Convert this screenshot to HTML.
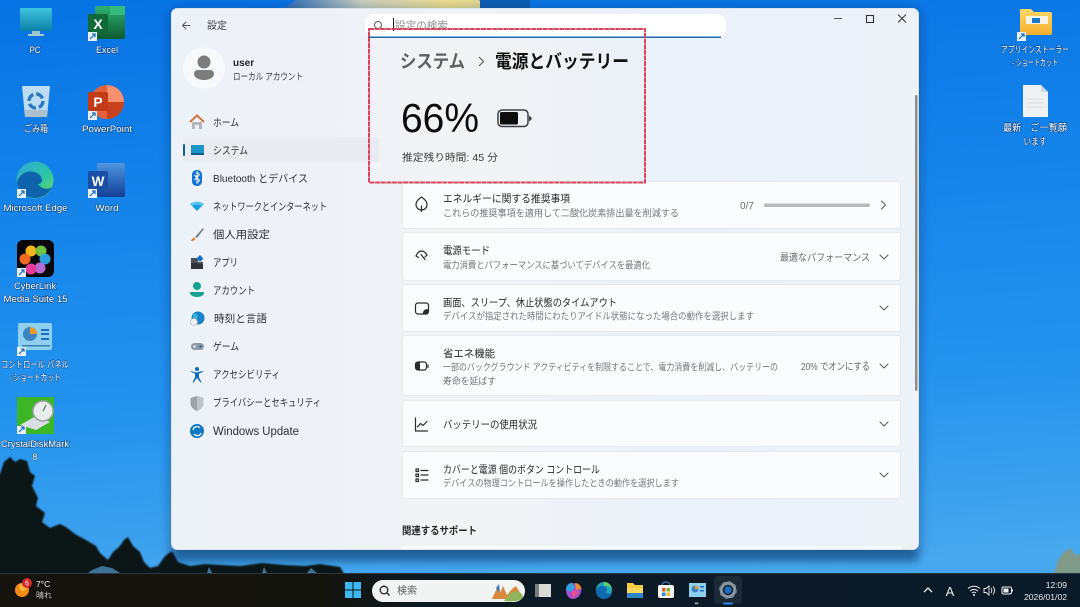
<!DOCTYPE html>
<html lang="ja"><head><meta charset="utf-8"><title>設定</title>
<style>
html,body{margin:0;padding:0;width:1080px;height:607px;overflow:hidden;background:#1a86e8}
svg{display:block}
text{font-family:"Liberation Sans","Noto Sans CJK JP",sans-serif}
.d{font-size:9.5px;fill:#fff;text-anchor:middle;paint-order:stroke;stroke:rgba(0,30,70,.55);stroke-width:1.2px}
.n{font-size:10.5px;fill:#2b2e33}
.t{font-size:10.5px;fill:#26282c}
.s{font-size:9.5px;fill:#74777c}
.r{font-size:10px;fill:#66696e}
.c{fill:none;stroke:#55585c;stroke-width:1;stroke-linecap:round;stroke-linejoin:round}
.i{fill:none;stroke:#2a2c30;stroke-width:1.2;stroke-linecap:round;stroke-linejoin:round}
.card{fill:#fbfcfe;stroke:#e7ebf0;stroke-width:1}
</style></head><body>
<svg width="1080" height="607" viewBox="0 0 1080 607" xmlns="http://www.w3.org/2000/svg">
<defs>
<linearGradient id="sky" x1="0" y1="0" x2="0.1" y2="1"><stop offset="0" stop-color="#0873e4"/><stop offset=".35" stop-color="#1484ea"/><stop offset=".7" stop-color="#2594ee"/><stop offset="1" stop-color="#48a8ee"/></linearGradient>
<linearGradient id="win" x1="0" y1="0" x2="1" y2="0"><stop offset="0" stop-color="#edf2f9"/><stop offset=".28" stop-color="#eff2f7"/><stop offset=".38" stop-color="#f2f3f4"/><stop offset=".65" stop-color="#ebf1f9"/><stop offset="1" stop-color="#edf2f9"/></linearGradient>
<linearGradient id="top" x1="0" y1="0" x2="1" y2="0"><stop offset="0" stop-color="#2f6fb5"/><stop offset=".35" stop-color="#c9cfc0"/><stop offset=".75" stop-color="#efe08f"/><stop offset="1" stop-color="#d9d79c"/></linearGradient>
<linearGradient id="bar" x1="0" y1="0" x2="1" y2="0"><stop offset="0" stop-color="#17130f"/><stop offset=".3" stop-color="#14140f"/><stop offset=".42" stop-color="#0c1a26"/><stop offset="1" stop-color="#0b1a28"/></linearGradient>
<linearGradient id="xl" x1="0" y1="0" x2="0" y2="1"><stop offset="0" stop-color="#2fb172"/><stop offset="1" stop-color="#0d5a30"/></linearGradient>
<linearGradient id="wd" x1="0" y1="0" x2="0" y2="1"><stop offset="0" stop-color="#4f95e0"/><stop offset="1" stop-color="#123f96"/></linearGradient>
<linearGradient id="pc" x1="0" y1="0" x2="0" y2="1"><stop offset="0" stop-color="#3fc4dd"/><stop offset="1" stop-color="#0c7fa8"/></linearGradient>
<linearGradient id="ed" x1="0" y1="0" x2="1" y2="1"><stop offset="0" stop-color="#2fa7dc"/><stop offset=".6" stop-color="#2ac7a3"/><stop offset="1" stop-color="#7ad65a"/></linearGradient>
<linearGradient id="fo" x1="0" y1="0" x2="0" y2="1"><stop offset="0" stop-color="#ffd867"/><stop offset="1" stop-color="#f3ae2d"/></linearGradient>
<filter id="ds" x="-5%" y="-5%" width="110%" height="110%"><feDropShadow dx="0" dy="2" stdDeviation="6" flood-color="#00204a" flood-opacity=".45"/></filter>
<filter id="b1"><feGaussianBlur stdDeviation="0.8"/></filter>
<filter id="b3" x="-5%" y="-100%" width="110%" height="300%"><feGaussianBlur stdDeviation="4"/></filter>
</defs>

<!-- wallpaper -->
<rect width="1080" height="607" fill="url(#sky)"/>
<polygon points="285,8 295,0 478,0 505,8" fill="url(#top)"/>
<rect x="480" y="0" width="50" height="8" fill="#0f5fb5"/>
<rect x="172" y="546" width="746" height="16" fill="#1d5f95" opacity=".75" filter="url(#b3)"/>
<g filter="url(#b1)" fill="#0b1719">
<polygon points="-10,474 0,474 4,462 10,457 15,462 20,459 27,461 30,472 35,476 32,486 38,498 36,506 45,513 42,522 50,528 60,524 66,527 75,534 86,540 96,546 100,553 108,560 113,552 119,547 124,540 128,537 133,546 140,552 144,562 150,568 158,566 165,556 172,551 178,562 190,566 205,564 222,565 240,566 262,563 285,565 305,566 320,564 340,567 348,580 -10,580"/>
</g>
<polygon fill="#4a8ab8" opacity=".8" points="92,570 102,566 112,568 120,573 88,573"/>
<polygon fill="#5a9cc8" opacity=".7" points="207,573 209,567 212,573"/>
<polygon fill="#5a9cc8" opacity=".7" points="262,573 264,567 267,573"/>
<polygon fill="#5a9cc8" opacity=".7" points="307,573 311,568 317,573"/>
<polygon fill="#7f9a88" points="1052,580 1058,560 1064,552 1070,548 1076,556 1080,553 1090,553 1090,580" filter="url(#b1)"/>

<!-- desktop icons -->
<rect x="20" y="8" width="32" height="23" rx="1" fill="url(#pc)"/><rect x="32" y="31" width="8" height="3" fill="#9fc2cf"/><rect x="28" y="34" width="16" height="2" fill="#a9c8d2"/>
<text class="d" x="35" y="53" textLength="11" lengthAdjust="spacingAndGlyphs">PC</text>
<rect x="95" y="6" width="30" height="33" rx="2" fill="url(#xl)"/><rect x="110" y="6" width="15" height="9" fill="#35b97c"/><rect x="88" y="14" width="20" height="19" rx="2" fill="#0e6b39"/>
<text x="98" y="29" font-size="14" font-weight="700" fill="#fff" text-anchor="middle">X</text>
<rect x="88" y="32" width="9" height="9" fill="#e6f1fb"/><path d="M90 39l5-5m-3 0h3v3" stroke="#1c6cc0" stroke-width="1.2" fill="none"/>
<text class="d" x="107" y="53" textLength="22" lengthAdjust="spacingAndGlyphs">Excel</text>
<path d="M22 86h28l-3 31h-22z" fill="#bcdcf2"/><rect x="25" y="110" width="22" height="7" fill="#aebfce"/>
<circle cx="36" cy="101" r="7" fill="none" stroke="#2a78c2" stroke-width="3.5" stroke-dasharray="8 3"/>
<text class="d" x="36" y="132" textLength="24" lengthAdjust="spacingAndGlyphs">ごみ箱</text>
<circle cx="107" cy="102" r="17" fill="#e2603a"/><path d="M107 85a17 17 0 0 1 17 17h-17z" fill="#f7906c"/><path d="M107 102h17a17 17 0 0 1-17 17z" fill="#c9401f"/>
<rect x="88" y="92" width="20" height="19" rx="2" fill="#c23a16"/>
<text x="98" y="107" font-size="14" font-weight="700" fill="#fff" text-anchor="middle">P</text>
<rect x="88" y="111" width="9" height="9" fill="#e6f1fb"/><path d="M90 118l5-5m-3 0h3v3" stroke="#1c6cc0" stroke-width="1.2" fill="none"/>
<text class="d" x="107" y="132" textLength="50" lengthAdjust="spacingAndGlyphs">PowerPoint</text>
<circle cx="35" cy="180" r="18.5" fill="url(#ed)"/><path d="M17 183c2-10 12-14 20-10 7 4 6 11 1 11 3 5 10 6 14 3-3 7-10 11-17 11-10 0-17-7-18-15z" fill="#0f63ad"/>
<rect x="17" y="189" width="9" height="9" fill="#e6f1fb"/><path d="M19 196l5-5m-3 0h3v3" stroke="#1c6cc0" stroke-width="1.2" fill="none"/>
<text class="d" x="35.500" y="211" textLength="64" lengthAdjust="spacingAndGlyphs">Microsoft Edge</text>
<rect x="97" y="163" width="28" height="34" rx="2" fill="url(#wd)"/><rect x="88" y="171" width="20" height="19" rx="2" fill="#1a4fa8"/>
<text x="98" y="186" font-size="13.5" font-weight="700" fill="#fff" text-anchor="middle">W</text>
<rect x="88" y="189" width="9" height="9" fill="#e6f1fb"/><path d="M90 196l5-5m-3 0h3v3" stroke="#1c6cc0" stroke-width="1.2" fill="none"/>
<text class="d" x="107" y="211" textLength="23" lengthAdjust="spacingAndGlyphs">Word</text>
<rect x="17" y="240" width="37" height="37" rx="6" fill="#07070c"/>
<circle cx="31" cy="251" r="5.5" fill="#f7b51c"/><circle cx="41" cy="251" r="5.5" fill="#74c13f"/><circle cx="45" cy="259" r="5.5" fill="#2a9fdc"/><circle cx="40" cy="268" r="5.5" fill="#b56bd6"/><circle cx="31" cy="269" r="5.5" fill="#e93a9a"/><circle cx="25" cy="259" r="5.5" fill="#f06a22"/>
<circle cx="35" cy="259" r="2.5" fill="#07070c"/>
<rect x="17" y="268" width="9" height="9" fill="#e6f1fb"/><path d="M19 275l5-5m-3 0h3v3" stroke="#1c6cc0" stroke-width="1.2" fill="none"/>
<text class="d" x="35" y="289" textLength="42" lengthAdjust="spacingAndGlyphs">CyberLink</text><text class="d" x="35.500" y="302" textLength="64" lengthAdjust="spacingAndGlyphs">Media Suite 15</text>
<rect x="18" y="323" width="34" height="27" rx="2" fill="#8fd0ef"/><circle cx="30" cy="334" r="7" fill="#3c83c4"/><path d="M30 327a7 7 0 0 1 7 7h-7z" fill="#ee9a22"/><rect x="41" y="329" width="8" height="2" fill="#1c6cc0"/><rect x="41" y="333" width="8" height="2" fill="#1c6cc0"/><rect x="41" y="338" width="8" height="2" fill="#1c6cc0"/><rect x="22" y="345" width="28" height="1.5" fill="#3b7fb8"/>
<rect x="17" y="347" width="9" height="9" fill="#e6f1fb"/><path d="M19 354l5-5m-3 0h3v3" stroke="#1c6cc0" stroke-width="1.2" fill="none"/>
<text class="d" x="35" y="368" textLength="68" lengthAdjust="spacingAndGlyphs">コントロール パネル</text>
<text class="d" x="35" y="381" textLength="52" lengthAdjust="spacingAndGlyphs">- ショートカット</text>
<rect x="17" y="397" width="37" height="37" fill="#3cb526"/><path d="M20 425l16-9 14 6-14 8z" fill="#d9dee2"/><circle cx="43" cy="411" r="10" fill="#e9edee" stroke="#9aa3a8" stroke-width="1.5"/><path d="M43 411l3-6" stroke="#555" fill="none"/>
<rect x="17" y="426" width="9" height="8" fill="#e6f1fb"/><path d="M19 432l5-5m-3 0h3v3" stroke="#1c6cc0" stroke-width="1.2" fill="none"/>
<text class="d" x="35" y="447" textLength="68" lengthAdjust="spacingAndGlyphs">CrystalDiskMark</text><text class="d" x="35" y="460">8</text>
<path d="M1020 12a2 2 0 0 1 2-3h9l3 3h16a2 2 0 0 1 2 2v19a2 2 0 0 1-2 2h-28a2 2 0 0 1-2-2z" fill="url(#fo)"/><rect x="1026" y="16" width="22" height="8" fill="#f5f2e8"/><rect x="1032" y="18" width="8" height="5" fill="#1d78c8"/>
<rect x="1017" y="32" width="9" height="9" fill="#e6f1fb"/><path d="M1019 39l5-5m-3 0h3v3" stroke="#1c6cc0" stroke-width="1.2" fill="none"/>
<text class="d" x="1035" y="53" textLength="68" lengthAdjust="spacingAndGlyphs">アプリインストーラー</text>
<text class="d" x="1035" y="66" textLength="46" lengthAdjust="spacingAndGlyphs">- ショートカット</text>
<path d="M1023 85h18l7 7v25h-25z" fill="#eef1f4"/><path d="M1041 85v7h7z" fill="#cfd6dc"/><path d="M1027 99h17M1027 103h17M1027 107h17" stroke="#d9dde1"/>
<text class="d" x="1035" y="131" textLength="64" lengthAdjust="spacingAndGlyphs">最新　ご一覧願</text>
<text class="d" x="1035" y="145" textLength="23" lengthAdjust="spacingAndGlyphs">います</text>

<!-- window -->
<rect x="171.5" y="8.5" width="747" height="541" rx="6" fill="url(#win)" stroke="#dfe4ea" filter="url(#ds)"/>
<path d="M190 25.5h-7m3-3.5l-3.5 3.5 3.5 3.5" class="c"/>
<text x="207" y="29" font-size="10" fill="#3c3f44">設定</text>
<path d="M834 18.5h8" stroke="#555" fill="none"/><rect x="866.5" y="15.5" width="7" height="7" fill="none" stroke="#333" stroke-width="1.1"/><path d="M898 14.5l8 8m0-8l-8 8" stroke="#333" fill="none"/>

<!-- user -->
<circle cx="204" cy="68" r="21" fill="#f8f9fb"/><circle cx="204" cy="62" r="6.5" fill="#7c7c7c"/><path d="M194 74a4 4 0 0 1 4-4h12a4 4 0 0 1 4 4c0 3-4 6-10 6s-10-3-10-6z" fill="#7c7c7c"/>
<text x="233" y="66" font-size="10" font-weight="700" fill="#1f2125">user</text>
<text x="233" y="80" font-size="9.5" fill="#3a3c40" textLength="70" lengthAdjust="spacingAndGlyphs">ローカル アカウント</text>

<!-- nav -->
<rect x="183" y="137" width="196" height="25" rx="3" fill="#e8ebef"/><rect x="183" y="144" width="2" height="12" rx="1" fill="#0a5f9e"/>
<text class="n" x="213" y="126" textLength="26" lengthAdjust="spacingAndGlyphs">ホーム</text>
<text class="n" x="213" y="154" textLength="35" lengthAdjust="spacingAndGlyphs">システム</text>
<text class="n" x="213" y="182" textLength="95" lengthAdjust="spacingAndGlyphs">Bluetooth とデバイス</text>
<text class="n" x="213" y="210" textLength="114" lengthAdjust="spacingAndGlyphs">ネットワークとインターネット</text>
<text class="n" x="213" y="238" textLength="57" lengthAdjust="spacingAndGlyphs">個人用設定</text>
<text class="n" x="213" y="266" textLength="25" lengthAdjust="spacingAndGlyphs">アプリ</text>
<text class="n" x="213" y="294" textLength="42" lengthAdjust="spacingAndGlyphs">アカウント</text>
<text class="n" x="214" y="322" textLength="53" lengthAdjust="spacingAndGlyphs">時刻と言語</text>
<text class="n" x="213" y="350" textLength="26" lengthAdjust="spacingAndGlyphs">ゲーム</text>
<text class="n" x="213" y="378" textLength="67" lengthAdjust="spacingAndGlyphs">アクセシビリティ</text>
<text class="n" x="213" y="406" textLength="108" lengthAdjust="spacingAndGlyphs">プライバシーとセキュリティ</text>
<text class="n" x="213" y="435" style="font-size:11.5px" textLength="86" lengthAdjust="spacingAndGlyphs">Windows Update</text>
<!-- nav icons -->
<path d="M190 122l7-6.500 7 6.500" fill="none" stroke="#c9743f" stroke-width="2"/><path d="M192 122h10v7h-3v-4h-4v4h-3z" fill="#b4b6b8"/>
<rect x="191" y="145" width="13" height="9" fill="#1a96c4"/><rect x="191" y="153" width="13" height="2" fill="#0e5f92"/>
<rect x="192" y="170" width="10" height="16" rx="4.500" fill="#1573d6"/><path d="M194.500 175l5 5.500-2.500 2.500v-11l2.500 2.500-5 5.500" fill="none" stroke="#fff"/>
<path d="M190 204c4-3 10-3 14 0l-7 7z" fill="#1a9ee0"/><path d="M190 204c4-3 10-3 14 0l-2 2c-3-2-7-2-10 0z" fill="#56c6f0"/>
<path d="M191 241c1-3 3-4 4-3 1 2-1 3-4 3z" fill="#e8862c"/><path d="M195 237l8-9 1 1-7 9z" fill="#7c7f86"/>
<rect x="191" y="258" width="7" height="5" fill="#4c5058"/><rect x="191" y="263" width="12" height="6" fill="#2e3238"/><rect x="198" y="262" width="5" height="2" fill="#4c5058"/><path d="M200 255l3.500 3.500-3.500 3.500-3.500-3.500z" fill="#1470c8"/>
<circle cx="197" cy="286" r="4" fill="#16a28e"/><path d="M191 292h12a1 1 0 0 1 1 1c0 2-3 4-7 4s-7-2-7-4a1 1 0 0 1 1-1z" fill="#16a28e"/>
<circle cx="198" cy="318" r="6.500" fill="#1884c8"/><path d="M193 314c3-1 5 1 5 3s-3 3-5 2z" fill="#38b0d8"/><circle cx="194" cy="322" r="3.500" fill="#f0f1f2" stroke="#aaa" stroke-width=".6"/>
<rect x="191" y="343" width="13" height="7" rx="3.500" fill="#8d9aa8"/><circle cx="194.500" cy="346.500" r="1.200" fill="#e8ebef"/><circle cx="200.500" cy="346.500" r="1.200" fill="#3a5a80"/>
<circle cx="197" cy="369" r="2" fill="#0f6cbd"/><path d="M191 372l4 1.500v4l-2.500 4.500 1 .5 3.500-4.500 3.500 4.500 1-.5-2.500-4.500v-4l4-1.500-.5-1-6 1.500-6-1.500z" fill="#0f6cbd"/>
<path d="M197 396l6.500 2v5c0 4-3 6.500-6.500 8-3.500-1.500-6.500-4-6.500-8v-5z" fill="#9da3aa"/><path d="M197 396l6.500 2v5c0 4-3 6.500-6.500 8z" fill="#c0c4c9"/>
<circle cx="197" cy="431" r="7" fill="#0f78c4"/><path d="M193 430a4 4 0 0 1 7-2m1 5a4 4 0 0 1-7 1" fill="none" stroke="#fff" stroke-width="1.200"/>

<!-- search -->
<rect x="365" y="14" width="361" height="24" rx="9" fill="#fff"/>
<rect x="368" y="36.500" width="353" height="1.500" fill="#1a6bab"/>
<circle cx="378" cy="25" r="3.500" fill="none" stroke="#555" stroke-width="1"/><path d="M380.500 27.500l2.500 2.500" stroke="#555"/>
<rect x="393" y="18" width="1" height="13" fill="#222"/>
<text x="395" y="29" font-size="10.5" fill="#8b8d90" textLength="53" lengthAdjust="spacingAndGlyphs">設定の検索</text>

<!-- header -->
<text x="400" y="68" font-size="18.500" font-weight="700" fill="#5e6063" textLength="65" lengthAdjust="spacingAndGlyphs">システム</text>
<path d="M479 57l4.500 4.500-4.500 4.500" fill="none" stroke="#5e6063" stroke-width="1.200"/>
<text x="495" y="68" font-size="18.500" font-weight="700" fill="#111" textLength="134" lengthAdjust="spacingAndGlyphs">電源とバッテリー</text>
<text x="401" y="132" font-size="41" fill="#0c0c0c" textLength="78" lengthAdjust="spacingAndGlyphs">66%</text>
<rect x="498" y="110" width="30" height="16.500" rx="4" fill="none" stroke="#3c3f42" stroke-width="1.500"/><rect x="500" y="112" width="18" height="12.500" rx="1.500" fill="#0d0d0d"/><path d="M529 115.500l2.500 2v2l-2.500 2z" fill="#3c3f42"/>
<text x="402" y="161" font-size="10" fill="#3c3e42" textLength="96" lengthAdjust="spacingAndGlyphs">推定残り時間: 45 分</text>

<!-- cards -->
<rect class="card" x="402.500" y="181.500" width="498" height="47" rx="3"/>
<rect class="card" x="402.500" y="232.500" width="498" height="48" rx="3"/>
<rect class="card" x="402.500" y="284.500" width="498" height="47" rx="3"/>
<rect class="card" x="402.500" y="335.500" width="498" height="60" rx="3"/>
<rect class="card" x="402.500" y="400.500" width="498" height="46" rx="3"/>
<rect class="card" x="402.500" y="451.500" width="498" height="47" rx="3"/>
<rect x="402" y="546" width="499" height="2.500" fill="#fbfcfe"/>

<!-- red annotation -->
<rect x="369" y="29" width="276" height="153.500" fill="none" stroke="#d9455d" stroke-width="2" stroke-dasharray="5 .6"/>

<text class="t" x="443" y="202" textLength="127" lengthAdjust="spacingAndGlyphs">エネルギーに関する推奨事項</text>
<text class="s" x="443" y="216.500" textLength="236" lengthAdjust="spacingAndGlyphs">これらの推奨事項を適用して二酸化炭素排出量を削減する</text>
<text class="t" x="443" y="254" textLength="47" lengthAdjust="spacingAndGlyphs">電源モード</text>
<text class="s" x="443" y="268.500" textLength="207" lengthAdjust="spacingAndGlyphs">電力消費とパフォーマンスに基づいてデバイスを最適化</text>
<text class="t" x="443" y="306" textLength="174" lengthAdjust="spacingAndGlyphs">画面、スリープ、休止状態のタイムアウト</text>
<text class="s" x="443" y="319.500" textLength="311" lengthAdjust="spacingAndGlyphs">デバイスが指定された時間にわたりアイドル状態になった場合の動作を選択します</text>
<text class="t" x="443" y="357" textLength="52" lengthAdjust="spacingAndGlyphs">省エネ機能</text>
<text class="s" x="443" y="370.500" textLength="335" lengthAdjust="spacingAndGlyphs">一部のバックグラウンド アクティビティを制限することで、電力消費を削減し、バッテリーの</text>
<text class="s" x="443" y="384.500" textLength="53" lengthAdjust="spacingAndGlyphs">寿命を延ばす</text>
<text class="t" x="443" y="428" textLength="94" lengthAdjust="spacingAndGlyphs">バッテリーの使用状況</text>
<text class="t" x="443" y="473" textLength="157" lengthAdjust="spacingAndGlyphs">カバーと電源 個のボタン コントロール</text>
<text class="s" x="443" y="486.500" textLength="236" lengthAdjust="spacingAndGlyphs">デバイスの物理コントロールを操作したときの動作を選択します</text>
<text x="402" y="534" font-size="10.500" font-weight="700" fill="#26282c" textLength="75" lengthAdjust="spacingAndGlyphs">関連するサポート</text>

<!-- right side -->
<text class="r" x="740" y="209">0/7</text><rect x="764" y="203.500" width="106" height="3.500" rx="1.700" fill="#b7b9bc"/>
<path d="M881.500 201l4 4-4 4" class="c"/>
<text class="r" x="780" y="261" textLength="90" lengthAdjust="spacingAndGlyphs">最適なパフォーマンス</text>
<path d="M880 255l4 4 4-4" class="c"/>
<path d="M880 306l4 4 4-4" class="c"/>
<text class="r" x="801" y="370" textLength="69" lengthAdjust="spacingAndGlyphs">20% でオンにする</text>
<path d="M880 364l4 4 4-4" class="c"/>
<path d="M880 422l4 4 4-4" class="c"/>
<path d="M880 473l4 4 4-4" class="c"/>
<rect x="915" y="95" width="2.500" height="296" rx="1.200" fill="#8b8f94"/>

<!-- card icons -->
<path d="M421.500 197c3 2 5.500 4.500 5.500 7.500a5.500 5.500 0 0 1-11 0c0-3 2.500-5.500 5.500-7.500zM421.500 206v5.500" class="i"/>
<path d="M416 256c1.500-3.500 3.500-5 5.500-5s4 1.500 5.500 4M421 254.500l4 5M416 256l2.500 1.500M427 255l-2 2" class="i"/>
<path d="M418 303h8a2.500 2.500 0 0 1 2.500 2.500v6a2.500 2.500 0 0 1-2.500 2.500h-8a2.500 2.500 0 0 1-2.500-2.500v-6a2.500 2.500 0 0 1 2.500-2.500z" class="i"/><path d="M423 314a4 4 0 0 1 5.500-4.500v3a2 2 0 0 1-2 2z" fill="#2a2c30"/>
<rect x="415.500" y="362" width="11" height="8" rx="2.500" class="i"/><path d="M415.500 364.500a2.500 2.500 0 0 1 2.500-2.500h2v8h-2a2.500 2.500 0 0 1-2.500-2.500z" fill="#2a2c30"/><path d="M428 365v2.500" class="i"/>
<path d="M415.500 418v13h12M417.500 427l3-3.500 2.500 2 4-4" class="i" stroke-width="1"/>
<rect x="416" y="469" width="2.500" height="2.500" class="i" stroke-width=".9"/><rect x="416" y="474" width="2.500" height="2.500" class="i" stroke-width=".9"/><rect x="416" y="479" width="2.500" height="2.500" class="i" stroke-width=".9"/><path d="M421 470.500h7M421 475h7M421 480h7" class="i" stroke-width="1"/>

<!-- taskbar -->
<rect x="0" y="573" width="1080" height="34" fill="url(#bar)"/>
<rect x="0" y="573" width="1080" height="1" fill="#2a3640"/>
<circle cx="22" cy="590" r="7" fill="#f38a16"/><circle cx="23" cy="587" r="4" fill="#fbb53a"/><circle cx="27" cy="583" r="5" fill="#d6282a"/><text x="27" y="585.500" font-size="7" fill="#fff" text-anchor="middle">6</text>
<text x="36" y="587" font-size="8.500" fill="#f2f2f2">7°C</text><text x="36" y="598" font-size="8" fill="#c9c9c9">晴れ</text>
<path d="M345 582h7.500v7.500H345zM353.500 582h7.500v7.500h-7.500zM345 590.500h7.500v7.500H345zM353.500 590.500h7.500v7.500h-7.500z" fill="#3bb8f2"/>
<rect x="372" y="580" width="153" height="22" rx="11" fill="#f2f3f3"/>
<circle cx="384" cy="590" r="3.800" fill="none" stroke="#222" stroke-width="1.300"/><path d="M387 593l2.500 2.500" stroke="#222" stroke-width="1.300"/>
<text x="397" y="594" font-size="10" fill="#5c5e60">検索</text>
<path d="M492 599l5-11 3 5 3-7 4 9 5-6 4-3 4 7v3c-2 3-6 3-9 3h-15z" fill="#d98a3c"/><path d="M504 601l5-7 6-3 6 2 2 4c-2 4-10 5-19 4z" fill="#92b35a"/><path d="M496 588l3-4 1 9z" fill="#3a78b8"/>
<rect x="535" y="584" width="16" height="13" fill="#d9d9d6"/><rect x="535" y="584" width="4" height="13" fill="#7d7d7b"/>
<path d="M566 590c0-5 3-7 6-7 4 0 4 3 7 3s3 4 2 6c-1 4-4 7-8 7-5 0-7-5-7-9z" fill="#a04fd0"/><path d="M566 590c0-5 3-7 6-7l3 4-4 5z" fill="#33a0e0"/><path d="M575 583c3 0 6 2 6 6l-5 1z" fill="#f08a32"/><path d="M571 592l5-2 3 3-6 5z" fill="#e84f8e"/>
<circle cx="604" cy="590" r="8" fill="#1ea7b5"/><path d="M596 591c1-5 6-6 9-4 3 2 2 5 0 5 2 2 5 2 7 1-1 4-5 6-8 6-5 0-8-4-8-8z" fill="#0f6ab4"/><path d="M604 582a8 8 0 0 1 8 7c-1-2-5-4-8-3z" fill="#5fd26a"/>
<path d="M627 583h6l2 2h8v13h-16z" fill="#f6ca42"/><rect x="627" y="591" width="16" height="7" fill="#2a86c8"/><rect x="627" y="588" width="16" height="5" fill="#f8d75c"/>
<rect x="658" y="585" width="16" height="13" rx="2" fill="#f4f5f6"/><path d="M662 585c0-4 8-4 8 0" fill="none" stroke="#3aa0d8"/><rect x="662" y="588" width="3.500" height="3.500" fill="#e8582a"/><rect x="666.500" y="588" width="3.500" height="3.500" fill="#7ab82c"/><rect x="662" y="592.500" width="3.500" height="3.500" fill="#2a8ad8"/><rect x="666.500" y="592.500" width="3.500" height="3.500" fill="#f4b520"/>
<rect x="689" y="583" width="17" height="14" fill="#8fd0ef"/><circle cx="695" cy="589" r="3.500" fill="#3c83c4"/><path d="M695 585.500a3.500 3.500 0 0 1 3.500 3.500H695z" fill="#ee9a22"/><rect x="700" y="586" width="4" height="1.500" fill="#1c6cc0"/><rect x="700" y="590" width="4" height="1.500" fill="#1c6cc0"/>
<rect x="694.500" y="602.500" width="4" height="1.800" rx=".9" fill="#9ea4a9"/>
<rect x="714" y="576" width="28" height="28" rx="3" fill="#1d2a36"/>
<circle cx="728" cy="590" r="6.800" fill="none" stroke="#8a97a4" stroke-width="3"/><circle cx="728" cy="590" r="3.500" fill="#1f6fc8"/><circle cx="728" cy="590" r="8" fill="none" stroke="#7d8a96" stroke-width="1.800" stroke-dasharray="3 3.300"/>
<rect x="723" y="602.500" width="10" height="2" rx="1" fill="#2a8fe8"/>
<path d="M924 592l4-4 4 4" fill="none" stroke="#eef0f2" stroke-width="1.300"/>
<text x="950" y="596" font-size="13" fill="#e8eaec" text-anchor="middle">A</text>
<path d="M968 588.500c3.500-3 8.500-3 12 0M970 591c2.500-2 5.500-2 8 0M972 593c1.200-1 2.800-1 4 0" fill="none" stroke="#eef0f2"/><circle cx="974" cy="595" r="1" fill="#eef0f2"/>
<path d="M984 588.500h2l3-2.500v9l-3-2.500h-2zM991 588c1 1.500 1 3.500 0 5M993 586.500c2 2.500 2 5.500 0 8" fill="none" stroke="#eef0f2" stroke-width=".9"/>
<rect x="1002" y="587" width="9.500" height="7" rx="1.500" fill="none" stroke="#eef0f2"/><rect x="1003.500" y="588.500" width="5" height="4" fill="#eef0f2"/><rect x="1012" y="589.500" width="1" height="2" fill="#eef0f2"/>
<text x="1067" y="588" font-size="8.500" fill="#e8eaec" text-anchor="end">12:09</text>
<text x="1067" y="600" font-size="8.500" fill="#e8eaec" text-anchor="end" textLength="43" lengthAdjust="spacingAndGlyphs">2026/01/02</text>
</svg>
</body></html>
